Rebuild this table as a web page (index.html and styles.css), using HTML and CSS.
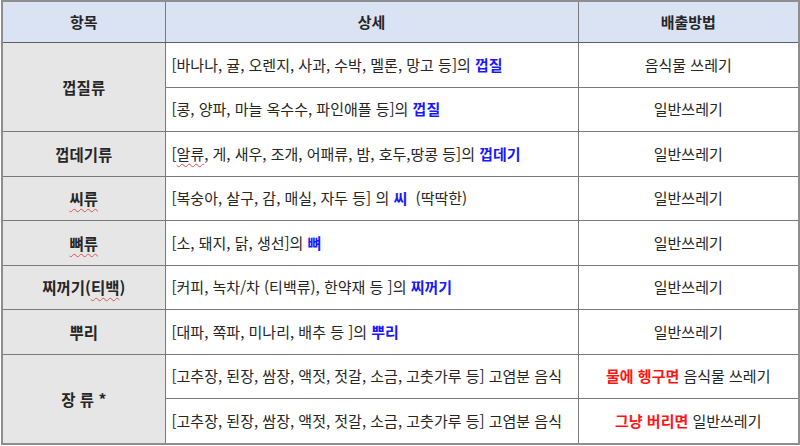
FILE: index.html
```html
<!DOCTYPE html>
<html lang="ko">
<head>
<meta charset="utf-8">
<link rel="stylesheet" href="styles.css">
</head>
<body>
<div class="wrap">
<table class="tbl">
  <colgroup>
    <col class="c1"><col class="c2"><col class="c3">
  </colgroup>
  <thead>
    <tr class="head">
      <th>항목</th><th>상세</th><th>배출방법</th>
    </tr>
  </thead>
  <tbody>
    <tr>
      <td class="cat" rowspan="2">껍질류</td>
      <td class="det">[바나나, 귤, 오렌지, 사과, 수박, 멜론, 망고 등]의 <b class="blue">껍질</b></td>
      <td class="how">음식물 쓰레기</td>
    </tr>
    <tr>
      <td class="det">[콩, 양파, 마늘 옥수수, 파인애플 등]의 <b class="blue">껍질</b></td>
      <td class="how">일반쓰레기</td>
    </tr>
    <tr>
      <td class="cat">껍데기류</td>
      <td class="det">[<span class="sq">알류</span>, 게, 새우, 조개, 어패류, 밤, 호두,땅콩 등]의 <b class="blue">껍데기</b></td>
      <td class="how">일반쓰레기</td>
    </tr>
    <tr>
      <td class="cat"><span class="sq">씨류</span></td>
      <td class="det">[복숭아, 살구, 감, 매실, 자두 등] 의 <b class="blue">씨</b> &nbsp;(딱딱한)</td>
      <td class="how">일반쓰레기</td>
    </tr>
    <tr>
      <td class="cat"><span class="sq">뼈류</span></td>
      <td class="det">[소, 돼지, 닭, 생선]의 <b class="blue">뼈</b></td>
      <td class="how">일반쓰레기</td>
    </tr>
    <tr>
      <td class="cat">찌꺼기(<span class="sq">티백</span>)</td>
      <td class="det">[커피, 녹차/차 (티백류), 한약재 등 ]의 <b class="blue">찌꺼기</b></td>
      <td class="how">일반쓰레기</td>
    </tr>
    <tr>
      <td class="cat">뿌리</td>
      <td class="det">[대파, 쪽파, 미나리, 배추 등 ]의 <b class="blue">뿌리</b></td>
      <td class="how">일반쓰레기</td>
    </tr>
    <tr>
      <td class="cat" rowspan="2">장 류 *</td>
      <td class="det">[고추장, 된장, 쌈장, 액젓, 젓갈, 소금, 고춧가루 등] 고염분 음식</td>
      <td class="how"><b class="red">물에 헹구면</b> 음식물 쓰레기</td>
    </tr>
    <tr>
      <td class="det">[고추장, 된장, 쌈장, 액젓, 젓갈, 소금, 고춧가루 등] 고염분 음식</td>
      <td class="how"><b class="red">그냥 버리면</b> 일반쓰레기</td>
    </tr>
  </tbody>
</table>
</div>
</body>
</html>
```

FILE: styles.css
```css
html, body {
  margin: 0;
  padding: 0;
  background: #ffffff;
}

.wrap {
  padding-left: 1px;
}

.tbl {
  border-collapse: collapse;
  table-layout: fixed;
  width: 797px;
  font-family: "Noto Sans CJK KR", "Noto Sans", sans-serif;
  font-size: 15px;
  color: #262626;
  border: 2px solid #8e8e8e;
}

.c1 { width: 163px; }
.c2 { width: 413px; }
.c3 { width: 221px; }

.tbl th,
.tbl td {
  border: 1px solid #7a7a7a;
  padding: 0 0 0 6px;
  vertical-align: middle;
  line-height: 20px;
  white-space: nowrap;
}

.head th {
  height: 40px;
  background: #dae3f3;
  font-weight: 700;
  text-align: center;
  padding: 0;
  font-size: 15px;
  border-bottom: 1px solid #5e5e5e;
}

.tbl tbody td {
  height: 43.5px;
}

.cat {
  background: #e7e6e6;
  font-weight: 700;
  text-align: center;
  font-size: 15.5px;
  padding: 0 !important;
}

.det {
  text-align: left;
}

.how {
  text-align: center;
  padding: 0 !important;
}

.blue {
  color: #1818ff;
  font-weight: 700;
}

.red {
  color: #ff1414;
  font-weight: 700;
}

.sq {
  text-decoration: underline wavy #e05050;
  text-decoration-thickness: 1px;
  text-underline-offset: 3px;
}
```
